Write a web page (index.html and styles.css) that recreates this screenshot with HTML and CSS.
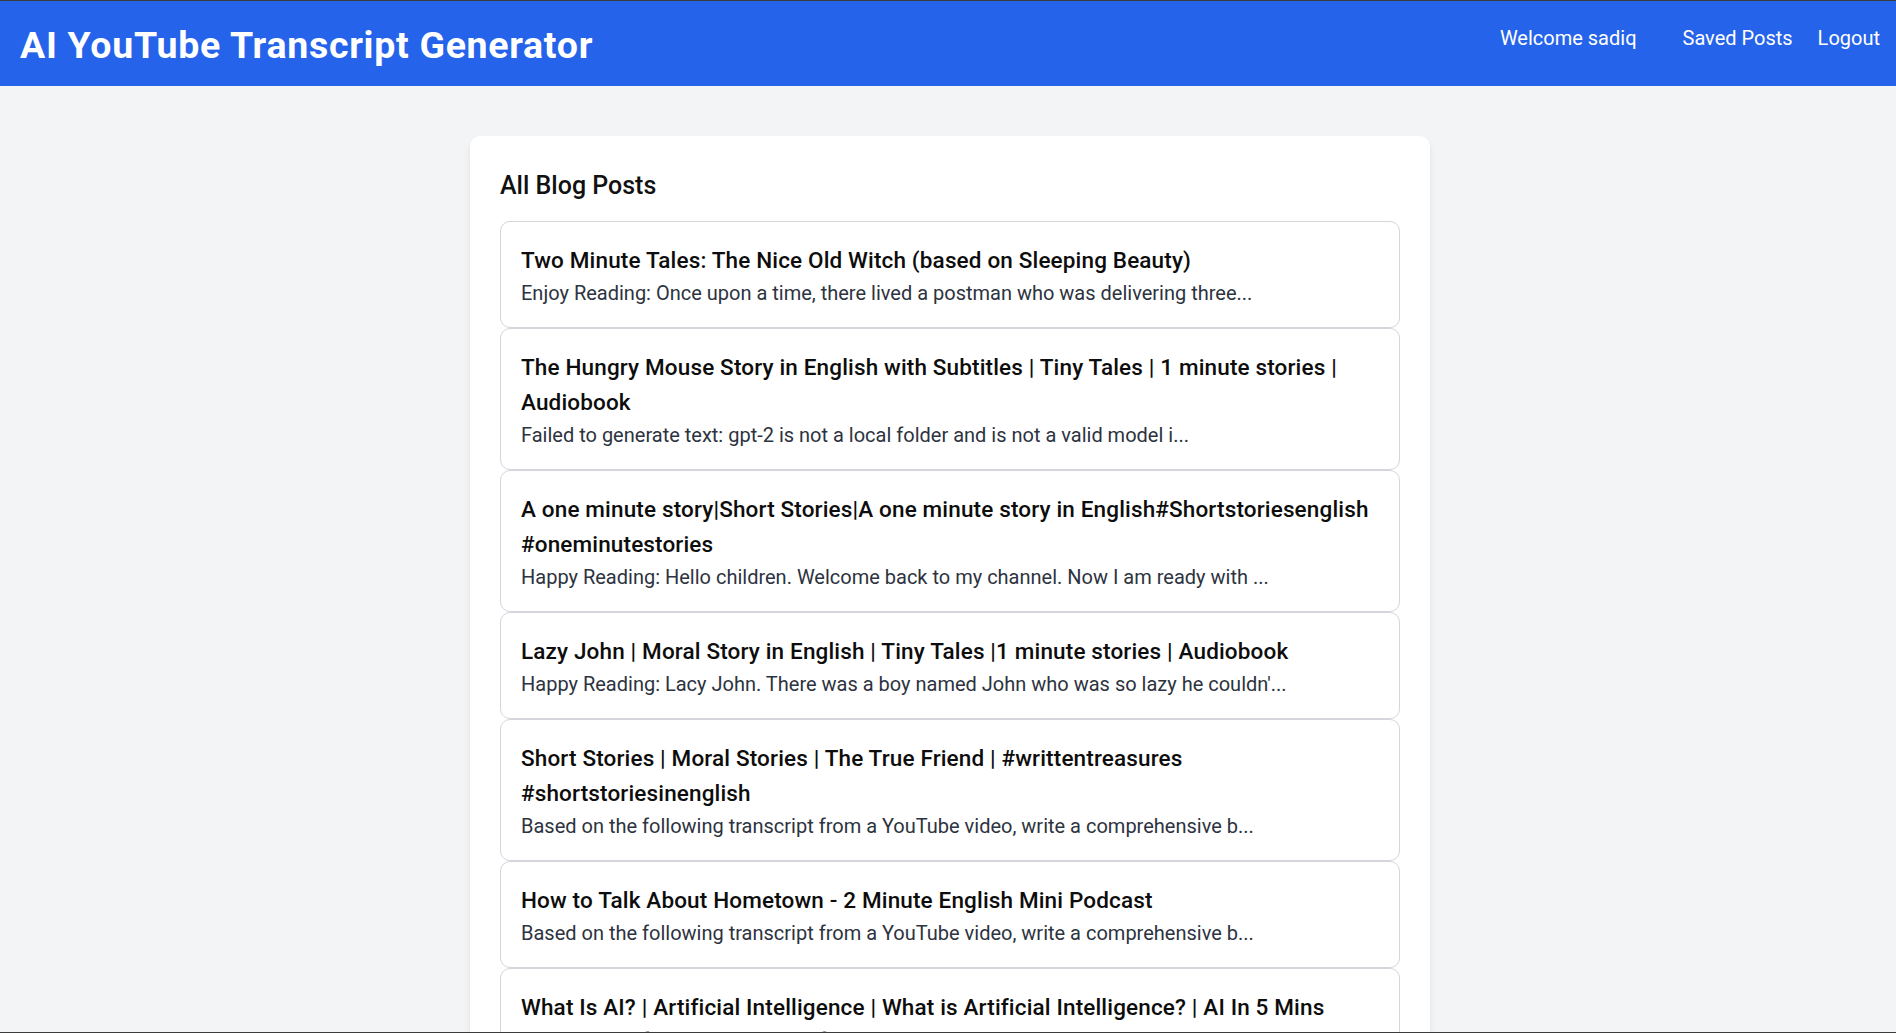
FILE: index.html
```html
<!DOCTYPE html>
<html lang="en">
<head>
<meta charset="utf-8">
<title>AI YouTube Transcript Generator</title>
<link rel="stylesheet" href="styles.css">
</head>
<body>
<header class="topbar">
  <h1 class="brand">AI YouTube Transcript Generator</h1>
  <nav class="nav">
    <span class="nav-welcome">Welcome sadiq</span>
    <a class="nav-link" href="#">Saved Posts</a>
    <a class="nav-link" href="#">Logout</a>
  </nav>
</header>
<main class="main">
  <section class="card">
    <h2 class="card-title">All Blog Posts</h2>
    <ul class="post-list">
      <li class="post">
        <h3 class="post-title">Two Minute Tales: The Nice Old Witch (based on Sleeping Beauty)</h3>
        <p class="post-desc">Enjoy Reading: Once upon a time, there lived a postman who was delivering three...</p>
      </li>
      <li class="post">
        <h3 class="post-title">The Hungry Mouse Story in English with Subtitles | Tiny Tales | 1 minute stories | Audiobook</h3>
        <p class="post-desc">Failed to generate text: gpt-2 is not a local folder and is not a valid model i...</p>
      </li>
      <li class="post">
        <h3 class="post-title">A one minute story|Short Stories|A one minute story in English#Shortstoriesenglish #oneminutestories</h3>
        <p class="post-desc">Happy Reading: Hello children. Welcome back to my channel. Now I am ready with ...</p>
      </li>
      <li class="post">
        <h3 class="post-title">Lazy John | Moral Story in English | Tiny Tales |1 minute stories | Audiobook</h3>
        <p class="post-desc">Happy Reading: Lacy John. There was a boy named John who was so lazy he couldn'...</p>
      </li>
      <li class="post">
        <h3 class="post-title">Short Stories | Moral Stories | The True Friend | #writtentreasures #shortstoriesinenglish</h3>
        <p class="post-desc">Based on the following transcript from a YouTube video, write a comprehensive b...</p>
      </li>
      <li class="post">
        <h3 class="post-title">How to Talk About Hometown - 2 Minute English Mini Podcast</h3>
        <p class="post-desc">Based on the following transcript from a YouTube video, write a comprehensive b...</p>
      </li>
      <li class="post">
        <h3 class="post-title">What Is AI? | Artificial Intelligence | What is Artificial Intelligence? | AI In 5 Mins</h3>
        <p class="post-desc">Based on the following transcript from a YouTube video, write a comprehensive b...</p>
      </li>
    </ul>
  </section>
</main>
</body>
</html>
```
FILE: styles.css
```css
html {
  border-top: 1px solid #3b3b3b;
  background: #f3f4f6;
}
body {
  margin: 0;
  background: #f3f4f6;
  font-family: Roboto, "Liberation Sans", sans-serif;
  color: #111827;
}
body::after {
  content: "";
  position: fixed;
  left: 0;
  right: 0;
  bottom: 0;
  height: 1px;
  background: #3b3b3b;
}
.topbar {
  display: flex;
  justify-content: space-between;
  align-items: flex-start;
  background: #2563eb;
  padding: 22px 16px 18px 20px;
}
.brand {
  margin: 0;
  color: #fff;
  font-size: 37.5px;
  line-height: 45px;
  font-weight: 700;
  letter-spacing: 0.7px;
}
.nav {
  display: flex;
  gap: 25px;
  font-size: 20px;
  line-height: 30px;
  color: #fff;
}
.nav-welcome {
  margin-right: 21px;
}
.nav-link {
  color: #fff;
  text-decoration: none;
}
.main {
  padding: 50px 0 0 4px;
}
.card {
  width: 900px;
  margin: 0 auto;
  background: #fff;
  padding: 30px;
  border-radius: 10px;
  box-shadow: 0 5px 8px -1px rgba(0,0,0,0.08), 0 2px 5px -2px rgba(0,0,0,0.08);
}
.card-title {
  margin: 0 0 18px;
  padding-top: 2px;
  font-size: 25px;
  line-height: 35px;
  font-weight: 500;
  color: #111;
}
.post-list {
  list-style: none;
  margin: 0;
  padding: 0;
}
.post {
  border: 1px solid #d4d6dc;
  border-radius: 10px;
  padding: 20.5px 20px 19.5px;
}
.post-title {
  margin: 0;
  font-size: 22.5px;
  line-height: 35px;
  font-weight: 500;
  letter-spacing: 0.15px;
  color: #0d0d0d;
}
.post-desc {
  margin: 0;
  font-size: 20px;
  line-height: 30px;
  color: #2d3340;
}
```
